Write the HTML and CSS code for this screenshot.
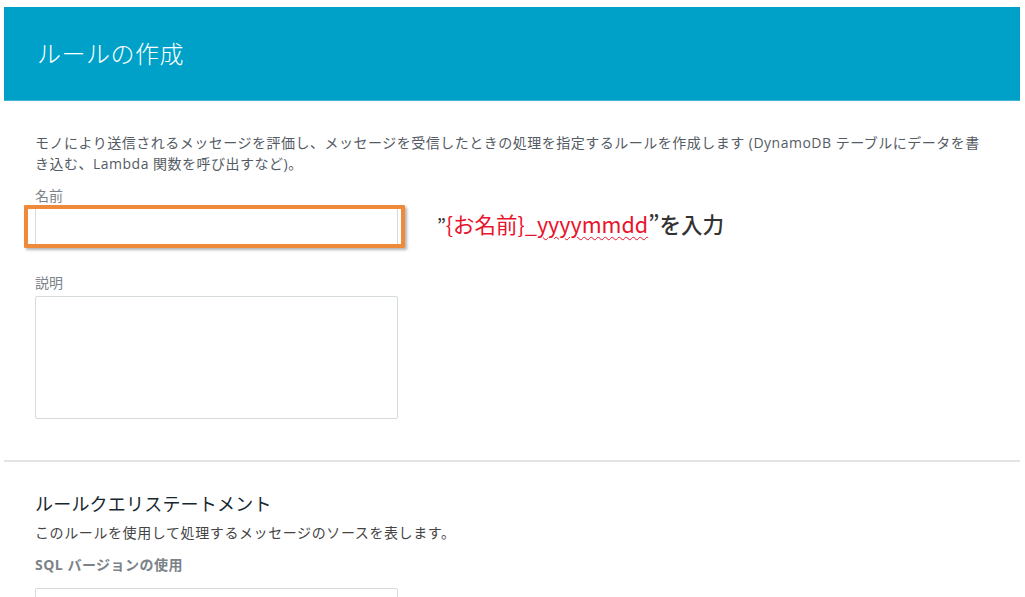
FILE: index.html
```html
<!DOCTYPE html>
<html lang="ja">
<head>
<meta charset="utf-8">
<title>ルールの作成</title>
<link rel="stylesheet" href="styles.css">
</head>
<body>
<div class="page">
  <header class="banner">
    <h1 class="banner-title">ルールの作成</h1>
  </header>
  <main class="content">
    <p class="intro">モノにより送信されるメッセージを評価し、メッセージを受信したときの処理を指定するルールを作成します (DynamoDB テーブルにデータを書き込む、Lambda 関数を呼び出すなど)。</p>
    <div class="field">
      <label class="label">名前</label>
      <div class="field-row">
        <div class="input-wrap">
          <input class="input" type="text">
          <div class="highlight"></div>
        </div>
        <div class="note"><span class="q">”</span><span class="red">{お名前}_<span class="squiggle">yyyymmdd</span></span>”を入力</div>
      </div>
    </div>
    <div class="field field-desc">
      <label class="label">説明</label>
      <textarea class="textarea"></textarea>
    </div>
  </main>
  <hr class="divider">
  <section class="content section">
    <h2 class="section-title">ルールクエリステートメント</h2>
    <p class="section-sub">このルールを使用して処理するメッセージのソースを表します。</p>
    <div class="label label-bold">SQL バージョンの使用</div>
    <div class="select"></div>
  </section>
</div>
</body>
</html>
```
FILE: styles.css
```css
* { box-sizing: border-box; }
html, body { margin: 0; padding: 0; background: #fff; overflow: hidden; }
body {
  font-family: "Open Sans", "Noto Sans CJK JP", sans-serif;
  color: #545b64;
  height: 597px;
}
.page { padding: 7px 5px 0 4px; }
.banner {
  background: #00a1c9;
  height: 94px;
  border-bottom: 1px solid #3db6d6;
  padding: 0 33px;
  display: flex;
  align-items: center;
}
.banner-title {
  margin: 0;
  color: #fff;
  font-size: 24px;
  font-weight: 300;
  letter-spacing: 0.5px;
  line-height: 1;
  padding-bottom: 2px;
  font-family: "Noto Sans CJK JP", sans-serif;
}
.content { padding: 0 31px; }
.intro {
  margin: 31px 0 0;
  font-size: 14px;
  line-height: 21px;
  letter-spacing: 0.5px;
  color: #545b64;
  max-width: 955px;
}
.field { margin-top: 12px; }
.label {
  display: block;
  font-size: 14px;
  line-height: 18px;
  color: #7c8288;
  font-family: "Noto Sans CJK JP", sans-serif;
}
.field-row {
  display: flex;
  align-items: center;
  margin-top: 3px;
}
.input-wrap { position: relative; width: 363px; height: 38px; }
.input {
  display: block;
  width: 100%;
  height: 100%;
  border: 1px solid #d5dbdb;
  border-radius: 2px;
  background: #fff;
  margin: 0;
  padding: 0 8px;
}
.highlight {
  position: absolute;
  left: -11px;
  right: -7px;
  top: -2px;
  bottom: -3px;
  border: 4px solid #ef8a3a;
  border-radius: 1px;
  box-shadow: 2px 2px 3px rgba(0,0,0,0.3);
}
.note {
  margin-left: 39px;
  font-family: "Noto Sans CJK JP", sans-serif;
  font-size: 21.5px;
  font-weight: 500;
  color: #333;
  line-height: 1;
  padding-bottom: 4px;
}
.note .q { font-size: 17px; }
.red { color: #e8142b; font-weight: 400; }
.squiggle {
  text-decoration: underline wavy #e8142b;
  text-decoration-thickness: 1px;
  text-underline-offset: 3px;
}
.field-desc { margin-top: 28px; }
.textarea {
  display: block;
  margin-top: 5px;
  width: 363px;
  height: 123px;
  border: 1px solid #d5dbdb;
  border-radius: 2px;
  resize: none;
}
.divider {
  border: 0;
  border-top: 2px solid #e4e4e4;
  margin: 41px 0 0;
}
.section-title {
  margin: 27px 0 0;
  font-size: 18px;
  font-weight: 400;
  line-height: 28px;
  color: #16282f;
  font-family: "Noto Sans CJK JP", sans-serif;
  letter-spacing: 0.2px;
}
.section-sub {
  margin: 5px 0 0;
  font-size: 14px;
  line-height: 21px;
  color: #444;
  letter-spacing: 0.6px;
}
.label-bold {
  margin-top: 13px;
  font-weight: 700;
  color: #7c8288;
  font-family: "Open Sans", "Noto Sans CJK JP", sans-serif;
  letter-spacing: 0.5px;
}
.select {
  margin-top: 14px;
  width: 363px;
  height: 34px;
  border: 1px solid #d5dbdb;
  border-radius: 2px;
}
```
